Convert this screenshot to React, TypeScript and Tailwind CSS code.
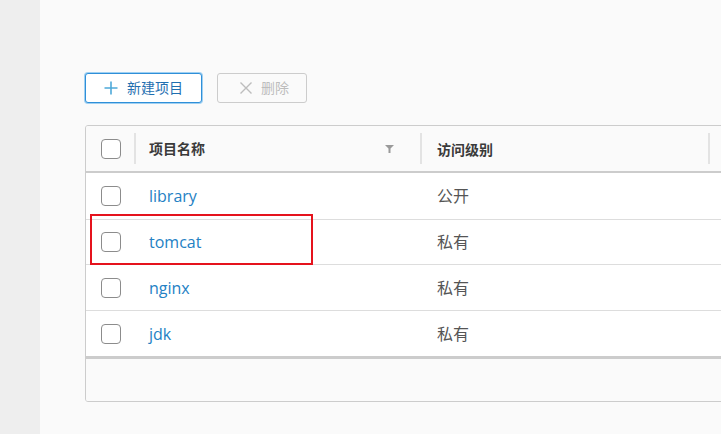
import React from "react";

const font = { fontFamily: '"Open Sans", "Noto Sans CJK SC", sans-serif' };

function Checkbox() {
  return <div className="w-[20px] h-[20px] rounded-[4px] border border-[#8c8c8c] bg-white shrink-0" />;
}

const rows = [
  { name: "library", level: "公开", h: "h-[47px]" },
  { name: "tomcat", level: "私有", h: "h-[45px]" },
  { name: "nginx", level: "私有", h: "h-[46px]" },
  { name: "jdk", level: "私有", h: "h-[45px]" },
];

export default function App() {
  return (
    <div className="w-[721px] h-[434px] overflow-hidden flex bg-[#fafafa]" style={font}>
      <div className="w-[40px] h-full bg-[#eeeeee] shrink-0" />
      <div className="flex-1 relative pl-[45px] pt-[73px]">
        {/* buttons */}
        <div className="flex gap-[15px] items-center">
          <div className="w-[117px] h-[30px] rounded-[3px] border border-[#2f8fd8] shadow-[0_0_0_1px_#9fd0f2] bg-white flex items-center pl-[18px] gap-[9px]">
            <svg width="14" height="14" viewBox="0 0 14 14" className="shrink-0">
              <path d="M7 0.5V13.5M0.5 7H13.5" stroke="#4ea9d9" strokeWidth="1.6" />
            </svg>
            <span className="text-[14px] text-[#1f6fb0] leading-none">新建项目</span>
          </div>
          <div className="w-[90px] h-[30px] rounded-[3px] border border-[#cccccc] flex items-center pl-[22px] gap-[9px]">
            <svg width="12" height="12" viewBox="0 0 12 12" className="shrink-0">
              <path d="M0.5 0.5L11.5 11.5M11.5 0.5L0.5 11.5" stroke="#bdbdbd" strokeWidth="1.4" />
            </svg>
            <span className="text-[14px] text-[#bdbdbd] leading-none">删除</span>
          </div>
        </div>

        {/* table */}
        <div className="mt-[22px] w-[900px] border border-[#cccccc] rounded-[3px] overflow-hidden">
          {/* header */}
          <div className="h-[47px] flex items-center bg-[#fafafa] border-b-[2px] border-[#cccccc]">
            <div className="w-[48px] pl-[15px] shrink-0 flex items-center">
              <Checkbox />
            </div>
            <div className="w-[2px] h-[31px] bg-[#e3e3e3] shrink-0" />
            <div className="w-[284px] shrink-0 pl-[13px] pr-[26px] flex items-center justify-between">
              <span className="text-[14px] font-semibold text-[#3a3a3a]">项目名称</span>
              <svg width="9" height="8" viewBox="0 0 9 8">
                <path d="M0 0H9L5.5 3.5V8H3.5V3.5Z" fill="#9a9a9a" />
              </svg>
            </div>
            <div className="w-[2px] h-[31px] bg-[#e3e3e3] shrink-0" />
            <div className="w-[286px] shrink-0 pl-[15px]">
              <span className="text-[14px] font-semibold text-[#3a3a3a]">访问级别</span>
            </div>
            <div className="w-[2px] h-[31px] bg-[#e3e3e3] shrink-0" />
          </div>
          {/* body */}
          {rows.map((r, i) => (
            <div
              key={r.name}
              className={
                r.h +
                " flex items-center bg-white " +
                (i < rows.length - 1 ? "border-b border-[#dddddd]" : "")
              }
            >
              <div className="w-[48px] pl-[15px] shrink-0 flex items-center">
                <Checkbox />
              </div>
              <div className="w-[287px] shrink-0 pl-[15px] text-[16px] text-[#2481c4]">{r.name}</div>
              <div className="w-[286px] shrink-0 pl-[16px] text-[16px] text-[#555555]">{r.level}</div>
            </div>
          ))}
          <div className="h-[3px] bg-[#cccccc]" />
          <div className="h-[42px] bg-[#fafafa]" />
        </div>

        {/* annotation box */}
        <div className="absolute left-[50px] top-[214px] w-[223px] h-[51px] border-2 border-[#e5131d] pointer-events-none" />
      </div>
    </div>
  );
}
